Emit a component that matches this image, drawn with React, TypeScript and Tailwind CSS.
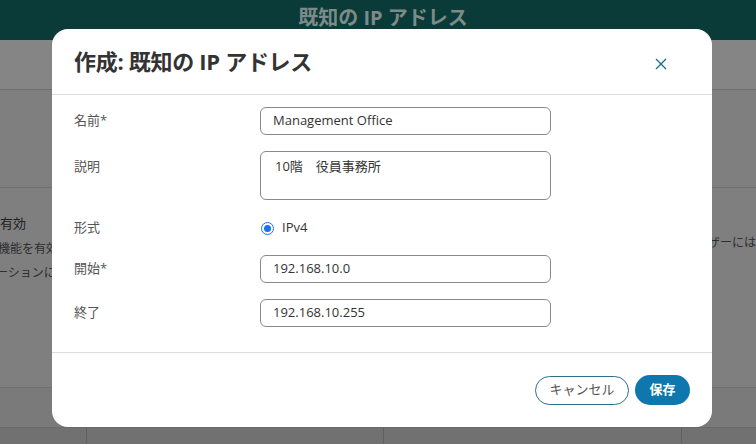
import React from "react";

const jp = { fontFamily: '"Open Sans", "Noto Sans CJK JP", sans-serif' };

function Field({ label, children, top = false }: { label: string; children: React.ReactNode; top?: boolean }) {
  return (
    <div className={`grid grid-cols-[186px_291px] ${top ? "items-start" : "items-center"}`}>
      <div className={`text-[13px] text-[#555] ${top ? "pt-[6px]" : ""}`}>{label}</div>
      {children}
    </div>
  );
}

function TextInput({ value }: { value: string }) {
  return (
    <div className="flex h-[28px] items-center rounded-[6px] border border-[#8a8a8a] px-3 text-[13px] text-[#333]">
      {value}
    </div>
  );
}

export default function App() {
  return (
    <div className="relative h-[444px] w-[756px] overflow-hidden bg-[#7d7d7d]" style={jp}>
      {/* dimmed page behind */}
      <div className="flex h-[40px] items-start justify-center bg-[#0b3b38] pl-[10px] pt-[3px]">
        <span className="text-[20px] font-bold text-[#7c8b89]">既知の IP アドレス</span>
      </div>
      <div className="h-[50px] border-b border-[#6f6f6f] bg-[#858585]" />
      <div className="h-[98px] border-b border-[#6f6f6f] bg-[#7f7f7f]" />
      <div className="flex h-[200px] justify-between border-b border-[#6f6f6f] bg-[#7f7f7f] pt-[26px] text-[12px] text-[#2e2e2e]">
        <div className="flex flex-col gap-[6px]">
          <span className="text-[13px] text-[#222]">有効</span>
          <span className="-ml-[2px]">機能を有効</span>
          <span className="-ml-[4px]">ーションに</span>
        </div>
        <div className="mt-[20px] whitespace-nowrap">ーザーには</div>
      </div>
      <div className="h-[40px] border-b border-[#6a6a6a] bg-[#7a7a7a]" />
      <div className="grid h-[20px] grid-cols-[87px_297px_298px_74px] bg-[#717171]">
        <div className="border-r border-[#5f5f5f]" />
        <div className="border-r border-[#5f5f5f]" />
        <div className="border-r border-[#5f5f5f]" />
        <div />
      </div>

      {/* modal */}
      <div className="absolute left-[52px] top-[29px] flex h-[398px] w-[660px] flex-col rounded-[16px] bg-white">
        <div className="flex h-[66px] shrink-0 items-center justify-between border-b border-[#dcdcdc] px-[22px]">
          <h2 className="text-[22px] font-bold tracking-[-0.3px] text-[#333]">作成: 既知の IP アドレス</h2>
          <svg width="12" height="12" viewBox="0 0 12 12" className="mr-[23px] mt-[4px]">
            <path d="M1 1L11 11M11 1L1 11" stroke="#1d6e8f" strokeWidth="1.4" />
          </svg>
        </div>

        <div className="flex flex-1 flex-col border-b border-[#dcdcdc] px-[22px] pt-[12px]">
          <Field label="名前*">
            <TextInput value="Management Office" />
          </Field>
          <div className="mt-[16px]">
            <Field label="説明" top>
              <div className="h-[49px] rounded-[6px] border border-[#8a8a8a] px-[14px] pt-[5px] text-[13px] text-[#333]">
                10階　役員事務所
              </div>
            </Field>
          </div>
          <div className="mt-[16px]">
            <Field label="形式">
              <div className="flex h-[24px] items-center gap-[8px] pl-[1px]">
                <span className="flex h-[13px] w-[13px] items-center justify-center rounded-full border-[1.5px] border-[#1a73e8] bg-white">
                  <span className="h-[7px] w-[7px] rounded-full bg-[#1a73e8]" />
                </span>
                <span className="text-[13px] text-[#333]">IPv4</span>
              </div>
            </Field>
          </div>
          <div className="mt-[15px]">
            <Field label="開始*">
              <TextInput value="192.168.10.0" />
            </Field>
          </div>
          <div className="mt-[16px]">
            <Field label="終了">
              <TextInput value="192.168.10.255" />
            </Field>
          </div>
        </div>

        <div className="flex h-[74px] shrink-0 items-center justify-end gap-[6px] px-[22px]">
          <button className="h-[29px] w-[94px] rounded-full border border-[#2c6d8a] text-[13px] text-[#555]">
            キャンセル
          </button>
          <button className="h-[30px] w-[55px] rounded-full bg-[#0e77ad] text-[13px] font-semibold text-white">
            保存
          </button>
        </div>
      </div>
    </div>
  );
}
